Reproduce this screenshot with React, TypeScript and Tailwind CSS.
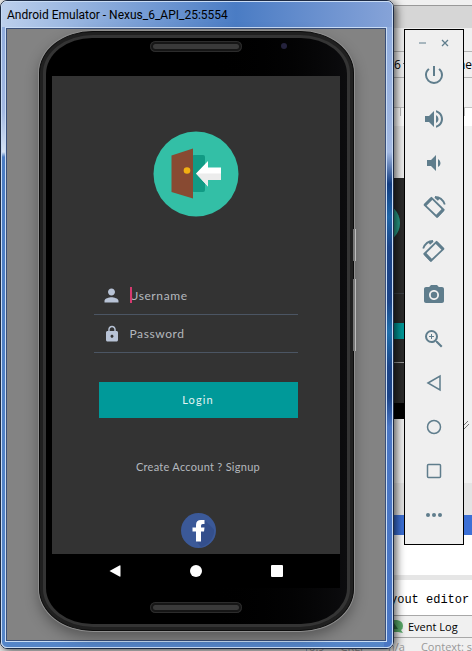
import type { ReactNode } from "react";
import { MdPerson, MdLock, MdPowerSettingsNew, MdVolumeUp, MdVolumeDown, MdPhotoCamera, MdZoomIn } from "react-icons/md";

function IdeBackground() {
  return (
    <div className="flex min-h-screen flex-col bg-[#f0f0f0] pl-[394px] font-['Open_Sans',sans-serif] text-[12px] text-black">
      <div className="h-[6px] border-b border-[#999]" />
      <div className="h-[22px] bg-[#d6d6d6]" />
      <div className="h-6 border-b border-[#b4b4b4]" />
      <div className="flex h-[26px] items-center justify-between border-b border-[#b4b4b4]">
        <span className="flex items-center gap-[2px]">
          6
          <svg className="h-1 w-[7px]" viewBox="0 0 7 4">
            <path d="M0 0H7L3.500 4Z" />
          </svg>
        </span>
        <span>ne</span>
      </div>
      <div className="h-[30px] border-b border-[#c4c4c4]" />
      <div className="flex h-[18px] items-start gap-[7px] overflow-hidden bg-white pl-[6px]">
        {Array.from({ length: 9 }, (_, i) => (
          <span key={i} className="h-2 w-px shrink-0 bg-[#c0c0c0]" />
        ))}
      </div>
      <div className="h-[52px]" />
      <div className="flex h-[241px] w-4 flex-col overflow-hidden bg-[#2b2b2b]">
        <div className="-ml-[34px] mt-[25px] size-10 shrink-0 rounded-full bg-[#2aa08b]" />
        <div className="mt-[50px] h-px bg-[#3c4046]" />
        <div className="mt-[29px] h-4 bg-[#009999]" />
        <div className="mt-[23px] h-px w-3 bg-[#999]" />
        <div className="mt-auto h-4 bg-black" />
      </div>
      <div className="flex h-16 items-start justify-end">
        <svg className="mt-[2px] size-[9px]" viewBox="0 0 9 9" stroke="#777" fill="none">
          <path d="M0 5 5 0M0 9 6 3" />
        </svg>
      </div>
      <div className="h-8 bg-[#e4e4e4]" />
      <div className="h-5 bg-[#3c70d6]" />
      <div className="h-10 bg-white" />
      <div className="h-[5px] bg-[#e6e6e6]" />
      <div className="flex h-[35px] items-center whitespace-nowrap bg-white pt-1 font-['Liberation_Mono',monospace]">
        <span className="-ml-1">yout editor</span>
      </div>
      <div className="flex h-[23px] items-center gap-[4px] whitespace-nowrap border-y border-[#a8a8a8]">
        <svg className="h-[14px] w-[10px]" viewBox="0 0 10 14">
          <path d="M0 0H3Q9 1 9 6 9 9 7 10L9 13 4 12H0Z" fill="#59a869" />
          <path d="M0 3 4 9H0Z" fill="#2f6f3d" />
        </svg>
        <span className="text-[11px] leading-4">Event Log</span>
      </div>
      <div className="-ml-[88px] flex h-[13px] justify-end gap-4 overflow-hidden whitespace-nowrap text-[11px] leading-[18px] text-[#999]">
        <span>10:9</span>
        <span>CRLF÷</span>
        <span>n/a</span>
        <span>Context: s</span>
      </div>
    </div>
  );
}

function Speaker() {
  return (
    <div className="mx-auto flex h-[11px] w-[92px] items-center rounded-full bg-[#161616] px-[3px] ring-1 ring-inset ring-[#2c2c2c]">
      <div className="h-[5px] w-full rounded-full bg-[#3a3a3a]" />
    </div>
  );
}

function DoorLogo() {
  return (
    <svg className="mx-auto size-[86px]" viewBox="0 0 86 86" role="img" aria-label="Login door">
      <circle cx="43" cy="43" r="42.5" fill="#33bfa6" />
      <rect x="39" y="24" width="13" height="37" rx="2" fill="#119a84" />
      <path d="M18.500 24.500 40 17.500V67.500L18.500 61Z" fill="#884a32" />
      <circle cx="34" cy="39.500" r="3.300" fill="#f2b012" />
      <path d="M43 42.500 55 30V36.500H68V49H55V55.500Z" fill="#fff" />
      <path d="M43 42.500H68V49H55V55.500Z" fill="#ececec" />
    </svg>
  );
}

function Field({ id, label, type, icon, caret }: { id: string; label: string; type: string; icon: ReactNode; caret?: boolean }) {
  return (
    <div className="flex h-[38px] items-center border-b border-[#4b5563] pl-[7px]">
      <label htmlFor={id} aria-label={label} className="flex w-[22px] justify-center text-[#b8c3d6]">
        {icon}
      </label>
      <div className="relative ml-[7px] min-w-0 flex-1">
        {caret && <span className="absolute -top-px left-0 h-4 w-[2px] bg-[#d6396f]" />}
        <input
          id={id}
          type={type}
          placeholder={label}
          className="block w-full bg-transparent text-[12px] leading-4 tracking-wider text-[#b4b8be] outline-none placeholder:text-[#b4b8be]"
        />
      </div>
    </div>
  );
}

function Phone() {
  return (
    <div className="relative mx-auto mt-[2px] w-[315px] rounded-[54px/42px] border border-[#0c0c0c] bg-[#202020] p-[3px] shadow-[0_0_0_1px_#8f8f8f,0_6px_14px_rgba(0,0,0,0.35)]">
      <div className="rounded-[50px/38px] bg-[#343434] p-[3px]">
        <div className="rounded-[46px/36px] bg-linear-to-r from-black from-50% to-[#0c0c0e] pb-[11px] pl-[6px] pr-[7px] font-['Lato',sans-serif]">
          <div className="relative flex h-[38px] items-start pt-[3px]">
            <Speaker />
            <span className="absolute left-[229px] top-[5px] size-[6px] rounded-full bg-[#24223c]" />
          </div>
          <main className="bg-[#333] px-[42px] pb-[6px] pt-[55px]">
            <DoorLogo />
            <form className="mt-[60px]" onSubmit={(e) => e.preventDefault()}>
              <Field id="username" label="Username" type="text" caret icon={<MdPerson className="size-[21px]" />} />
              <Field id="password" label="Password" type="password" icon={<MdLock className="size-[18px]" />} />
              <div className="pl-[5px] text-center">
                <button type="submit" className="mt-[29px] block h-9 w-full bg-[#009999] text-[11px] tracking-widest text-[#e4f4f4]">
                  Login
                </button>
                <a href="#signup" className="mt-[41px] block whitespace-nowrap text-[11px] leading-4 tracking-wide text-[#b4b8be]">
                  Create Account ? Signup
                </a>
                <button type="button" aria-label="Sign in with Facebook" className="mt-[38px] block w-full">
                  <svg className="mx-auto size-[35px]" viewBox="0 0 35 35">
                    <circle cx="17.500" cy="17.500" r="17.500" fill="#3b5998" />
                    <path d="M23.500 7 33 16.500A17 17 0 0 1 20 34L15 28 20 15Z" fill="#344f8c" />
                    <path d="M15 28.500V18.500H11.500V14.500H15V12Q15 7 20 7H23.500V11H21.500Q20 11 20 12.500V14.500H23.500L23 18.500H20V28.500Z" fill="#fff" />
                  </svg>
                </button>
              </div>
            </form>
          </main>
          <nav className="flex h-[34px] items-center justify-center gap-[69px] bg-black">
            <button type="button" aria-label="Back">
              <svg className="size-3" viewBox="0 0 12 12" fill="#fff"><path d="M0.500 6 10.500 0.500Q11.500 0 11.500 1V11Q11.500 12 10.500 11.500Z" /></svg>
            </button>
            <button type="button" aria-label="Home" className="size-3 rounded-full bg-white" />
            <button type="button" aria-label="Overview" className="size-3 rounded-[1px] bg-white" />
          </nav>
          <div className="pt-[14px]">
            <Speaker />
          </div>
        </div>
      </div>
      <span className="absolute -right-[3px] top-[197px] h-8 w-[3px] border-r border-[#bdbdbd] bg-[#777]" />
      <span className="absolute -right-[3px] top-[247px] h-[72px] w-[3px] border-r border-[#bdbdbd] bg-[#777]" />
    </div>
  );
}

function EmulatorWindow() {
  return (
    <section className="min-w-0 flex-1 rounded-[7px] border border-[#1d2b45] shadow-[2px_2px_10px_rgba(0,0,0,0.7)]">
      <div className="rounded-[6px] border border-[#c9dcf5] bg-[linear-gradient(to_bottom,#8ba9dc_0,#a3b9e2_150px,#123c80_182px,#1f66a8_215px,#1c4488_245px,#1c4488_300px,#2070ac_330px,#1c4488_365px,#1c4488_395px,#4a76c4_425px,#4a76c4_100%),linear-gradient(to_bottom,#8ba9dc_0,#a3b9e2_110px,#d5e2f3_150px,#4a7cc4_155px,#5585c8_100%)] bg-[length:8px_100%,100%_100%] bg-[position:right_top,left_top] bg-no-repeat pb-[5px] pl-[3px] pr-[5px]">
        <header className="-ml-[3px] -mr-[5px] flex h-[25px] items-center rounded-t-[5px] bg-linear-to-r from-[#bccfec] via-[#4a7cc4] via-60% to-[#86a3d8] pl-[5px] font-['Roboto',sans-serif] text-[12px] text-black">
          <h1 className="whitespace-nowrap">Android Emulator - Nexus_6_API_25:5554</h1>
        </header>
        <div className="border border-[#c9dcf5] bg-[#838383] pb-[10px] pt-px shadow-[inset_0_0_0_1px_#3a4f78]">
          <Phone />
        </div>
      </div>
    </section>
  );
}

function RotateIcon({ flip }: { flip?: boolean }) {
  return (
    <svg className={flip ? "size-6 -scale-x-100" : "size-6"} viewBox="0 0 24 24" fill="none" stroke="currentColor">
      <path d="M9.500 2.800 21.800 15 15.200 22 2.500 9.800Z" strokeWidth="1.800" strokeLinejoin="round" />
      <path d="M14.800 21.200 21 14.800M3.200 10 9.600 3.500" strokeWidth="3" />
      <path d="M13 2Q20 2 22.800 9.500M13 2 16.500 5" strokeWidth="1.800" />
    </svg>
  );
}

const tools: { name: string; icon: ReactNode }[] = [
  { name: "Power", icon: <MdPowerSettingsNew className="size-6" /> },
  { name: "Volume up", icon: <MdVolumeUp className="size-6" /> },
  { name: "Volume down", icon: <MdVolumeDown className="size-6" /> },
  { name: "Rotate left", icon: <RotateIcon /> },
  { name: "Rotate right", icon: <RotateIcon flip /> },
  { name: "Take screenshot", icon: <MdPhotoCamera className="size-6" /> },
  { name: "Zoom", icon: <MdZoomIn className="size-6" /> },
  { name: "Back", icon: <svg className="size-6" viewBox="0 0 24 24" fill="none" stroke="currentColor" strokeWidth="1.500"><path d="M6 12 18 5V19Z" /></svg> },
  { name: "Home", icon: <svg className="size-6" viewBox="0 0 24 24" fill="none" stroke="currentColor" strokeWidth="1.500"><circle cx="12" cy="12" r="6.500" /></svg> },
  { name: "Overview", icon: <svg className="size-6" viewBox="0 0 24 24" fill="none" stroke="currentColor" strokeWidth="1.500"><rect x="5.500" y="5.500" width="13" height="13" rx="1" /></svg> },
  { name: "More", icon: <svg className="size-6" viewBox="0 0 24 24" fill="currentColor"><circle cx="6" cy="12" r="2" /><circle cx="12" cy="12" r="2" /><circle cx="18" cy="12" r="2" /></svg> },
];

function Toolbar() {
  return (
    <aside className="mr-2 mt-[29px] w-[60px] shrink-0 border border-black bg-[#efefef] pb-[7px] text-[#5f7d8c]">
      <div className="flex h-[23px] items-center justify-center gap-[14px] pt-[3px]">
        <button type="button" aria-label="Minimize">
          <svg className="size-2" viewBox="0 0 8 8" stroke="currentColor"><path d="M0 4H7" /></svg>
        </button>
        <button type="button" aria-label="Close">
          <svg className="size-2" viewBox="0 0 8 8" stroke="currentColor" strokeWidth="1.300"><path d="M1 1 7 7M7 1 1 7" /></svg>
        </button>
      </div>
      {tools.map((t) => (
        <button key={t.name} type="button" aria-label={t.name} className="flex h-11 w-full items-center justify-center">
          {t.icon}
        </button>
      ))}
    </aside>
  );
}

export default function App() {
  return (
    <div className="relative overflow-hidden">
      <IdeBackground />
      <div className="absolute inset-0 flex items-start gap-[10px]">
        <EmulatorWindow />
        <Toolbar />
      </div>
    </div>
  );
}
